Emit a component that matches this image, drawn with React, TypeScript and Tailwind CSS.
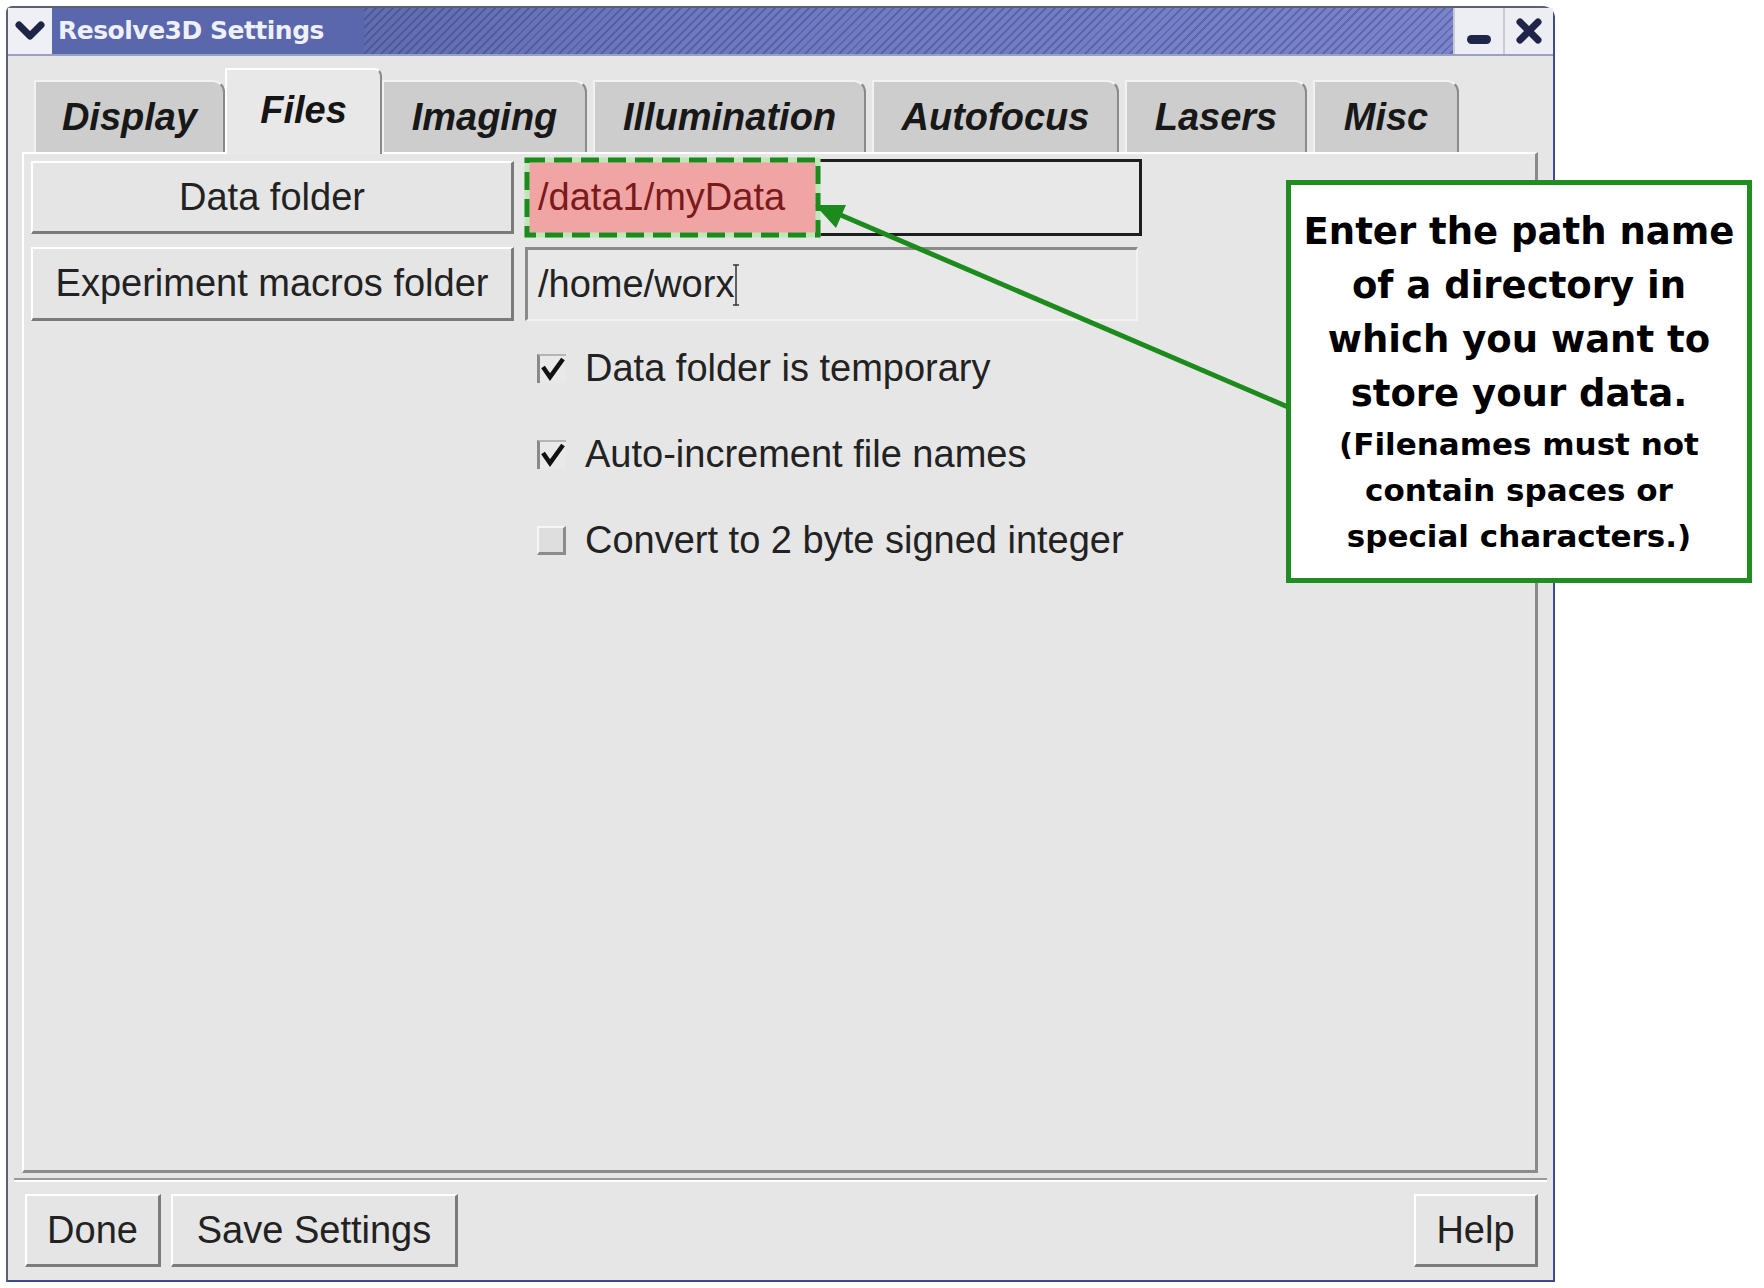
import React from "react";

type Tab = { label: string; cls: string; active?: boolean };

const tabs: Tab[] = [
  { label: "Display", cls: "w-[191px]" },
  { label: "Files", cls: "w-[157px]", active: true },
  { label: "Imaging", cls: "w-[205px]" },
  { label: "Illumination", cls: "ml-[6px] w-[273px]" },
  { label: "Autofocus", cls: "ml-[6px] w-[247px]" },
  { label: "Lasers", cls: "ml-[6px] w-[182px]" },
  { label: "Misc", cls: "ml-[6px] w-[146px]" },
];

const checks = [
  { label: "Data folder is temporary", on: true },
  { label: "Auto-increment file names", on: true },
  { label: "Convert to 2 byte signed integer", on: false },
];

const raised =
  "border-t-2 border-l-2 border-t-white border-l-white border-r-[3px] border-b-[3px] border-r-[#7b7b7b] border-b-[#7b7b7b] bg-[#e5e5e5]";

const Checkbox = ({ on }: { on: boolean }) =>
  on ? (
    <div className="flex h-[29px] w-[29px] items-center justify-center border-l-[3px] border-t-2 border-l-[#8a8a8a] border-t-[#b5b5b5] bg-[#e9e9e9]">
      <svg width="24" height="24" viewBox="0 0 24 24">
        <path d="M2 10 L9 20 L22 2" fill="none" stroke="#111" strokeWidth="4.5" />
      </svg>
    </div>
  ) : (
    <div className="h-[29px] w-[29px] border-b-[3px] border-r-[3px] border-l-2 border-t-2 border-b-[#8c8c8c] border-r-[#8c8c8c] border-l-[#f6f6f6] border-t-[#f6f6f6] bg-[#dedede]" />
  );

const Tabs = () => (
  <div className="flex h-[96px] items-end pl-[26px]">
    {tabs.map((t) =>
      t.active ? (
        <div
          key={t.label}
          className={`${t.cls} relative z-10 -mb-[2px] flex h-[86px] items-center justify-center rounded-tr-[8px] border-l-2 border-r-2 border-t-2 border-l-white border-t-white border-r-[#8a8a8a] bg-[#e8e8e8] pb-[4px] text-[38px] font-bold italic text-[#151515]`}
        >
          {t.label}
        </div>
      ) : (
        <div
          key={t.label}
          className={`${t.cls} flex h-[72px] items-center justify-center rounded-tr-[12px] border-l-2 border-r-2 border-t-2 border-l-[#f2f2f2] border-t-[#f2f2f2] border-r-[#8a8a8a] bg-[#cdcdcd] text-[38px] font-bold italic text-[#181818]`}
        >
          {t.label}
        </div>
      ),
    )}
  </div>
);

const TitleBar = () => (
  <div className="flex h-[48px] border-b-2 border-[#9aa0c0]">
    <div className="flex w-[44px] items-center justify-center bg-[#eef0f6]">
      <svg width="30" height="22" viewBox="0 0 30 22">
        <path d="M4 5 L15 16 L26 5" fill="none" stroke="#1e2448" strokeWidth="7" strokeLinecap="round" strokeLinejoin="round" />
      </svg>
    </div>
    <div className="flex flex-1 items-center bg-[#6671b8] [background-image:repeating-linear-gradient(135deg,rgba(30,40,100,0.28)_0px,rgba(30,40,100,0.28)_2px,transparent_2px,transparent_6px),linear-gradient(90deg,#55619f,#6d78c0_45%,#7a83cb)]">
      <div className="flex h-full items-center bg-[#5a67ac] pl-[6px] pr-[40px] font-['DejaVu_Sans'] text-[25px] font-bold tracking-[-0.5px] text-[#eef0fa]">
        Resolve3D Settings
      </div>
    </div>
    <div className="flex w-[50px] items-end justify-center border-l-2 border-[#c8cad6] bg-[#eceef4] pb-[10px]">
      <div className="h-[9px] w-[24px] rounded-full bg-[#1f2548]" />
    </div>
    <div className="flex w-[50px] items-center justify-center border-l-2 border-[#c8cad6] bg-[#eceef4]">
      <svg width="28" height="28" viewBox="0 0 28 28">
        <path d="M5 5 L23 23 M23 5 L5 23" stroke="#1f2548" strokeWidth="7" strokeLinecap="round" />
      </svg>
    </div>
  </div>
);

const Panel = () => (
  <div className="mx-[14px] mr-[15px] flex flex-1 flex-col border-l-2 border-t-2 border-l-white border-t-white border-b-[3px] border-r-[3px] border-b-[#8a8a8a] border-r-[#8a8a8a] pl-[7px] pt-[5px]">
    <div className="flex items-center gap-[11px]">
      <div className={`${raised} flex h-[73px] w-[483px] items-center justify-center`}>Data folder</div>
      <div className="flex h-[77px] w-[617px] items-stretch border-[3px] border-[#1e1e1e] border-l-[#7a7a7a] bg-[#e8e8e8]">
        <div className="flex w-[288px] items-center bg-[#f1a4a4] pl-[10px] text-[#7a1a1a]">/data1/myData</div>
      </div>
    </div>
    <div className="mt-[11px] flex items-center gap-[11px]">
      <div className={`${raised} flex h-[74px] w-[483px] items-center justify-center`}>Experiment macros folder</div>
      <div className="flex h-[74px] w-[613px] items-center border-l-[3px] border-t-[3px] border-b-2 border-r-2 border-l-[#8a8a8a] border-t-[#8a8a8a] border-b-[#f2f2f2] border-r-[#f2f2f2] bg-[#e8e8e8] pl-[10px]">
        /home/worx
        <svg width="8" height="44" viewBox="0 0 8 44" className="-ml-[2px]">
          <path d="M1 2 H7 M4 2 V42 M1 42 H7" stroke="#333" strokeWidth="1.5" fill="none" />
        </svg>
      </div>
    </div>
    <div className="ml-[506px] mt-[4px] flex flex-col">
      {checks.map((c) => (
        <div key={c.label} className="flex h-[86px] items-center gap-[19px]">
          <Checkbox on={c.on} />
          <span>{c.label}</span>
        </div>
      ))}
    </div>
  </div>
);

const BottomBar = () => (
  <div className="flex h-[107px] flex-col">
    <div className="mx-[6px] mt-[5px] border-t-2 border-b-2 border-t-[#9a9a9a] border-b-white" />
    <div className="mt-[12px] flex items-center pl-[17px] pr-[15px]">
      <div className={`${raised} flex h-[73px] w-[136px] items-center justify-center`}>Done</div>
      <div className={`${raised} ml-[10px] flex h-[73px] w-[287px] items-center justify-center`}>Save Settings</div>
      <div className={`${raised} ml-auto flex h-[73px] w-[124px] items-center justify-center`}>Help</div>
    </div>
  </div>
);

export default function App() {
  return (
    <div className="relative h-[1288px] w-[1764px] overflow-hidden bg-white pl-[6px] pt-[6px] font-['Liberation_Sans',Arial,sans-serif] text-[38px] text-[#222]">
      <div className="flex h-[1276px] w-[1549px] flex-col rounded-tl-[6px] rounded-tr-[12px] border-2 border-[#5d6070] border-b-[#3f4a8a] border-r-[#3f4a8a] bg-[#e6e6e6]">
        <TitleBar />
        <Tabs />
        <Panel />
        <BottomBar />
      </div>

      <svg className="pointer-events-none absolute left-0 top-0" width="1764" height="1288" viewBox="0 0 1764 1288">
        <rect x="527" y="160" width="291" height="75" fill="none" stroke="#bfe8b8" strokeWidth="5" />
        <rect x="527" y="160" width="291" height="75" fill="none" stroke="#1c8a1c" strokeWidth="5" strokeDasharray="18 9" />
        <line x1="1288" y1="407" x2="836" y2="213" stroke="#1c8a1c" strokeWidth="5" />
        <polygon points="815,205 846,205 836,228" fill="#1c8a1c" />
      </svg>

      <div className="absolute left-[1286px] top-[180px] flex h-[403px] w-[466px] flex-col items-center justify-center border-[5px] border-[#1f8d1f] bg-white text-center font-['DejaVu_Sans',sans-serif] font-bold text-black">
        <div className="text-[37px] leading-[54px]">
          Enter the path name
          <br />
          of a directory in
          <br />
          which you want to
          <br />
          store your data.
        </div>
        <div className="text-[31px] leading-[46px]">
          (Filenames must not
          <br />
          contain spaces or
          <br />
          special characters.)
        </div>
      </div>
    </div>
  );
}
